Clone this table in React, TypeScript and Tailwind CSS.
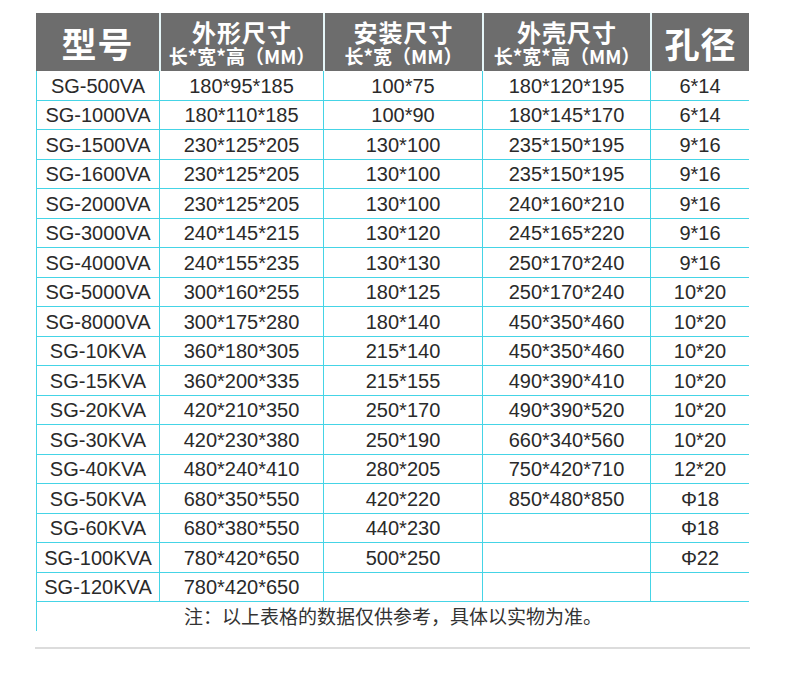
import React from "react";

type Row = [string, string, string, string, string];

const rows: Row[] = [
  ["SG-500VA", "180*95*185", "100*75", "180*120*195", "6*14"],
  ["SG-1000VA", "180*110*185", "100*90", "180*145*170", "6*14"],
  ["SG-1500VA", "230*125*205", "130*100", "235*150*195", "9*16"],
  ["SG-1600VA", "230*125*205", "130*100", "235*150*195", "9*16"],
  ["SG-2000VA", "230*125*205", "130*100", "240*160*210", "9*16"],
  ["SG-3000VA", "240*145*215", "130*120", "245*165*220", "9*16"],
  ["SG-4000VA", "240*155*235", "130*130", "250*170*240", "9*16"],
  ["SG-5000VA", "300*160*255", "180*125", "250*170*240", "10*20"],
  ["SG-8000VA", "300*175*280", "180*140", "450*350*460", "10*20"],
  ["SG-10KVA", "360*180*305", "215*140", "450*350*460", "10*20"],
  ["SG-15KVA", "360*200*335", "215*155", "490*390*410", "10*20"],
  ["SG-20KVA", "420*210*350", "250*170", "490*390*520", "10*20"],
  ["SG-30KVA", "420*230*380", "250*190", "660*340*560", "10*20"],
  ["SG-40KVA", "480*240*410", "280*205", "750*420*710", "12*20"],
  ["SG-50KVA", "680*350*550", "420*220", "850*480*850", "Φ18"],
  ["SG-60KVA", "680*380*550", "440*230", "", "Φ18"],
  ["SG-100KVA", "780*420*650", "500*250", "", "Φ22"],
  ["SG-120KVA", "780*420*650", "", "", ""],
];

const widths = ["w-[123px]", "w-[164px]", "w-[159px]", "w-[168px]", "w-[99px]"];

const cjk = "font-['Noto_Sans_CJK_SC',sans-serif]";

const HeaderCell: React.FC<{
  width: string;
  first?: boolean;
  children: React.ReactNode;
}> = ({ width, first, children }) => (
  <div
    className={`${width} h-full bg-[#6d6d6d] text-white flex flex-col items-center justify-center ${
      first ? "" : "border-l-2 border-[#e6f6f8]"
    }`}
  >
    {children}
  </div>
);

const TwoLine: React.FC<{ top: string; bottom: string }> = ({ top, bottom }) => (
  <>
    <div className="text-[24px] font-bold leading-[27px] tracking-[1px]">{top}</div>
    <div className="text-[19px] font-bold leading-[21px] whitespace-nowrap">{bottom}</div>
  </>
);

export default function App() {
  return (
    <div className="w-[790px] h-[687px] bg-white pt-[13px] pl-[36px]">
      <div className="w-[713px]">
        {/* header */}
        <div className={`flex h-[58px] ${cjk}`}>
          <HeaderCell width={widths[0]} first>
            <div className="text-[35px] font-bold tracking-[1px] leading-none">型号</div>
          </HeaderCell>
          <HeaderCell width={widths[1]}>
            <TwoLine top="外形尺寸" bottom="长*宽*高（MM）" />
          </HeaderCell>
          <HeaderCell width={widths[2]}>
            <TwoLine top="安装尺寸" bottom="长*宽（MM）" />
          </HeaderCell>
          <HeaderCell width={widths[3]}>
            <TwoLine top="外壳尺寸" bottom="长*宽*高（MM）" />
          </HeaderCell>
          <HeaderCell width={widths[4]}>
            <div className="text-[35px] font-bold tracking-[1px] leading-none">孔径</div>
          </HeaderCell>
        </div>

        {/* data rows */}
        <div className="font-['Liberation_Sans',Arial,sans-serif] text-[20px] text-[#2a2a2a]">
          {rows.map((row, r) => (
            <div
              key={row[0]}
              className={`flex border-b border-[#45d4e6] ${r % 2 ? "h-[29px]" : "h-[30px]"}`}
            >
              {row.map((cell, i) => (
                <div
                  key={i}
                  className={`${widths[i]} border-l border-[#45d4e6] flex items-center justify-center`}
                >
                  {cell}
                </div>
              ))}
            </div>
          ))}
        </div>

        {/* note */}
        <div
          className={`h-[29px] border-l border-[#45d4e6] flex items-center justify-center text-[19px] text-[#333] ${cjk}`}
        >
          注：以上表格的数据仅供参考，具体以实物为准。
        </div>
      </div>

      <div className="mt-[16px] -ml-[1px] w-[715px] h-[2px] bg-[#dcdcdc]" />
    </div>
  );
}
